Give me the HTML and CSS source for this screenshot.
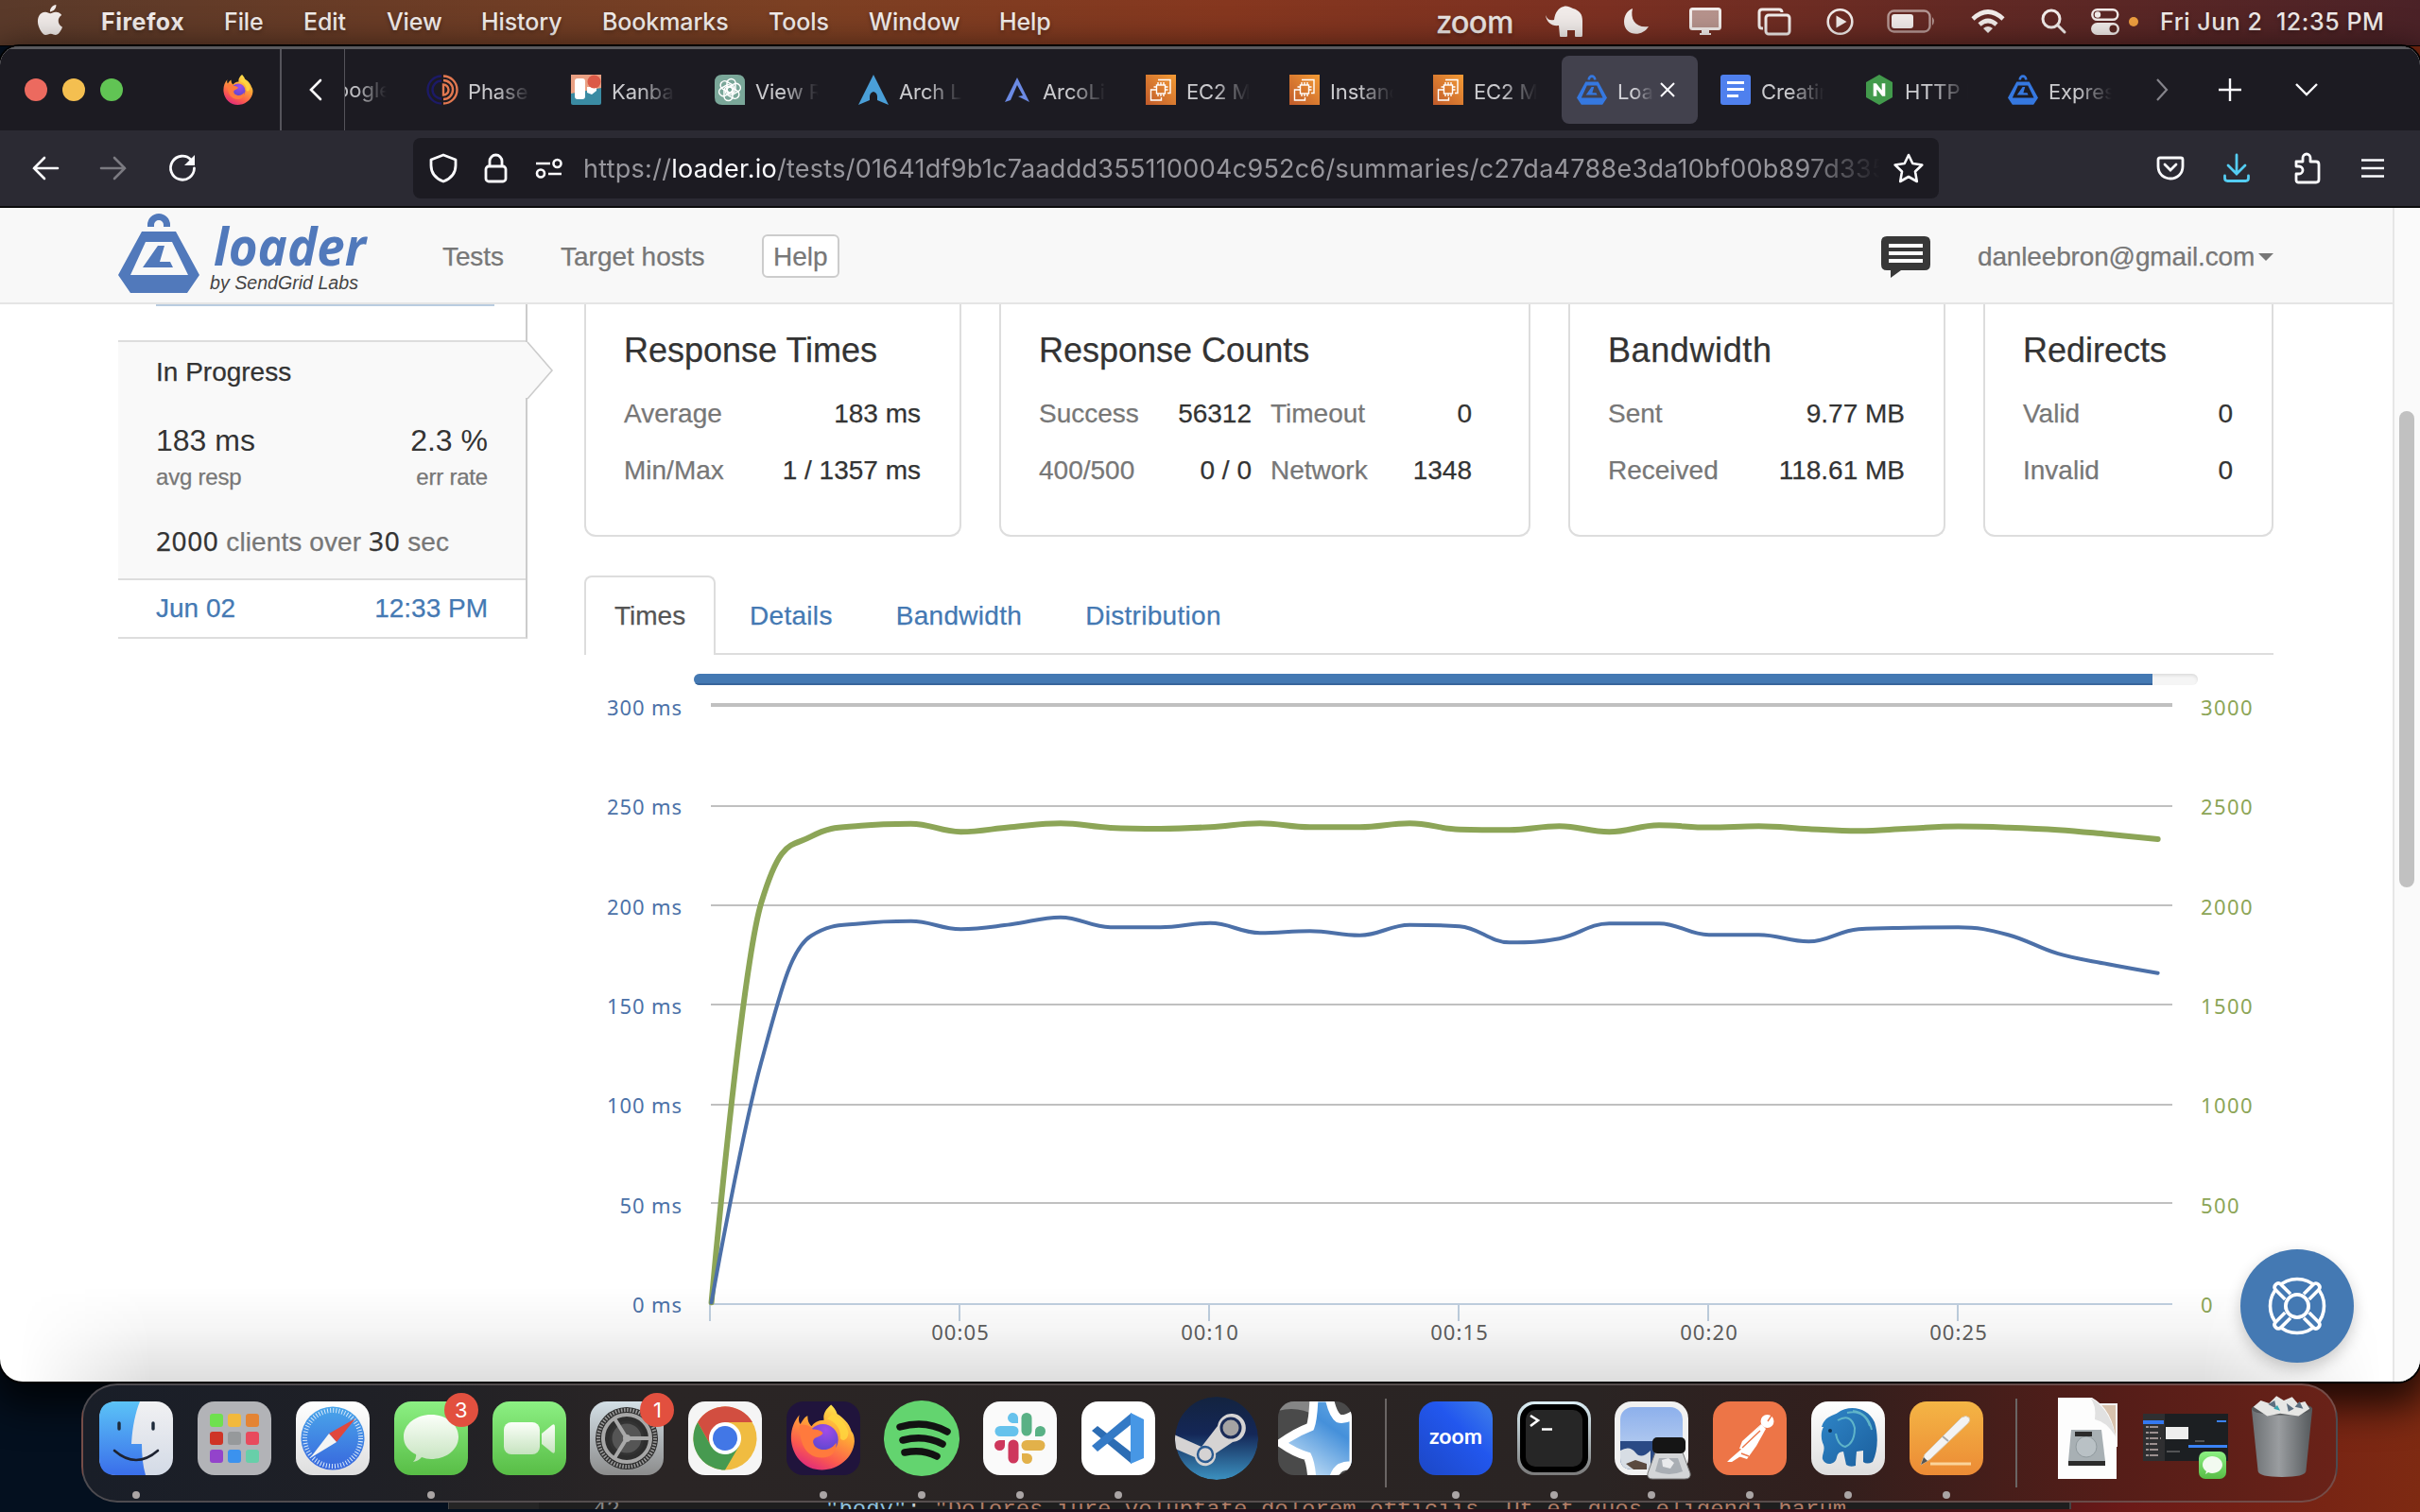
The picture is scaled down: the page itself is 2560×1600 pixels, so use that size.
FILE: index.html
```html
<!DOCTYPE html>
<html lang="en">
<head>
<meta charset="utf-8">
<title>loader.io</title>
<link rel="stylesheet" href="styles.css">
</head>
<body>
<svg width="0" height="0" class="defs">
  <defs>
    <linearGradient id="gFox" x1="0.8" y1="0" x2="0.3" y2="1"><stop offset="0" stop-color="#fff04f"/><stop offset=".4" stop-color="#ffa436"/><stop offset=".75" stop-color="#fb5a4e"/><stop offset="1" stop-color="#df2a7c"/></linearGradient>
    <radialGradient id="gGlobe" cx=".6" cy=".2" r=".9"><stop offset="0" stop-color="#a04ce8"/><stop offset="1" stop-color="#4a45c8"/></radialGradient>
    <linearGradient id="gGreen" x1="0" y1="0" x2="0" y2="1"><stop offset="0" stop-color="#8cf083"/><stop offset="1" stop-color="#58bd46"/></linearGradient>
    <linearGradient id="gBubble" x1="0" y1="0" x2="0" y2="1"><stop offset="0" stop-color="#fbfff9"/><stop offset="1" stop-color="#c6e3bf"/></linearGradient>
    <linearGradient id="gBlue" x1="0" y1="0" x2="0" y2="1"><stop offset="0" stop-color="#5bc3f7"/><stop offset="1" stop-color="#3a6eea"/></linearGradient>
    <linearGradient id="gFace" x1="0" y1="0" x2="0" y2="1"><stop offset="0" stop-color="#f1f1f3"/><stop offset="1" stop-color="#d3dae6"/></linearGradient>
    <linearGradient id="gWhite" x1="0" y1="0" x2="0" y2="1"><stop offset="0" stop-color="#ffffff"/><stop offset="1" stop-color="#dedede"/></linearGradient>
    <linearGradient id="gSafari" x1="0" y1="0" x2="0" y2="1"><stop offset="0" stop-color="#4aa6ea"/><stop offset="1" stop-color="#3867dd"/></linearGradient>
    <linearGradient id="gGear" x1="0" y1="0" x2="0" y2="1"><stop offset="0" stop-color="#d3dfe6"/><stop offset="1" stop-color="#8c8c8c"/></linearGradient>
    <linearGradient id="gSteam" x1="0" y1="0" x2="0" y2="1"><stop offset="0" stop-color="#13233f"/><stop offset=".45" stop-color="#142757"/><stop offset="1" stop-color="#3c91c0"/></linearGradient>
    <linearGradient id="gStar" x1="1" y1="0" x2=".4" y2="1"><stop offset="0" stop-color="#6aaee6"/><stop offset=".4" stop-color="#4590da"/><stop offset="1" stop-color="#c5e0f6"/></linearGradient>
    <linearGradient id="gZoom" x1="1" y1="0" x2="0" y2="1"><stop offset="0" stop-color="#3f80ea"/><stop offset=".4" stop-color="#2257ee"/><stop offset="1" stop-color="#1c47c5"/></linearGradient>
    <linearGradient id="gTerm" x1="0" y1="0" x2="0" y2="1"><stop offset="0" stop-color="#dbeef5"/><stop offset="1" stop-color="#7b7b7b"/></linearGradient>
    <linearGradient id="gSky" x1="0" y1="0" x2="0" y2="1"><stop offset="0" stop-color="#8db0ec"/><stop offset="1" stop-color="#c6d8f1"/></linearGradient>
    <linearGradient id="gPages" x1="0" y1="0" x2="0" y2="1"><stop offset="0" stop-color="#f4b545"/><stop offset="1" stop-color="#ec8b35"/></linearGradient>
    <linearGradient id="gTrash" x1="0" y1="0" x2="1" y2="0"><stop offset="0" stop-color="#6b6f72"/><stop offset=".45" stop-color="#9a9da0"/><stop offset="1" stop-color="#55595c"/></linearGradient>
    <linearGradient id="gEc2" x1="1" y1="0" x2="0" y2="1"><stop offset="0" stop-color="#f39b35"/><stop offset="1" stop-color="#c05b2b"/></linearGradient>
    <linearGradient id="gPg" x1="0" y1="0" x2="1" y2="1"><stop offset="0" stop-color="#2f86c8"/><stop offset="1" stop-color="#1b5f9d"/></linearGradient>
    <symbol id="fox" viewBox="0 0 64 64">
      <path d="M60 26C58 18 51 12 46 9 45 5 42 2 40 0c-6 5-8 10-7 15-6 0-10 3-12 6-3-2-4-6-4-10-3 1-5 5-7 8C8 17 8 13 9 10 3 17 0 26 1 36c2 16 14 28 30 28s31-12 32-28c0-4-1-8-3-10z" fill="url(#gFox)"/>
      <circle cx="32" cy="34" r="15" fill="url(#gGlobe)"/>
      <path d="M9 20c5-1 10 0 13 4 4 0 9 1 10 4-3 4-7 3-9 6s1 9 8 10c6 1 12-3 14-7 1 9-5 15-14 15C18 52 9 42 9 20z" fill="#ff7a3d"/>
      <path d="M36 14c9 3 14 10 13 19 3 4 8 1 8-6-2-8-8-14-16-18z" fill="#ffd83f" opacity=".8"/>
    </symbol>
    <symbol id="flask" viewBox="0 0 86 84">
      <path d="M31 14V12a12 12 0 0 1 24 0V14H48V12a5 5 0 0 0-10 0V14zM25 19H61L86 65 73 84H13L0 65zM29 30L13 65H74L57 30zM42 34H49L44 51H55L58 57H26z"/>
    </symbol>
    <symbol id="ec2" viewBox="0 0 32 32">
      <rect width="32" height="32" fill="url(#gEc2)"/>
      <g fill="none" stroke="#fff" stroke-width="1.4"><rect x="11.500" y="11" width="9" height="9"/><path d="M13 8v3m3-3v3m3-3v3M13 20v3m3-3v3m3-3v3M8.500 13h3m-3 3h3m9-3h3m-3 3h3M13 5.500h13v14h-3M10 16H5.500v11h11v-3"/></g>
    </symbol>
  </defs>
</svg>

<header class="menubar">
  <svg class="apple" viewBox="0 0 24 24" width="32" height="32" fill="#f2ecea"><path d="M12.152 6.896c-.948 0-2.415-1.078-3.960-1.040-2.040.027-3.910 1.183-4.961 3.014-2.117 3.675-.546 9.103 1.519 12.090 1.013 1.454 2.208 3.090 3.792 3.039 1.520-.065 2.090-.987 3.935-.987 1.831 0 2.350.987 3.960.948 1.637-.026 2.676-1.480 3.676-2.948 1.156-1.688 1.636-3.325 1.662-3.415-.039-.013-3.182-1.221-3.220-4.857-.026-3.040 2.480-4.494 2.597-4.559-1.429-2.090-3.623-2.324-4.390-2.376-2-.156-3.675 1.090-4.610 1.090zM15.530 3.830c.843-1.012 1.400-2.427 1.245-3.830-1.207.052-2.662.805-3.532 1.818-.780.896-1.454 2.338-1.273 3.714 1.338.104 2.715-.688 3.559-1.701"/></svg>
  <b>Firefox</b><span>File</span><span>Edit</span><span>View</span><span>History</span><span>Bookmarks</span><span>Tools</span><span>Window</span><span>Help</span>
  <svg width="82" height="40" viewBox="0 0 82 40"><text x="0" y="32" font-family="Lato" font-size="35" fill="#f2ecea" stroke="#f2ecea" stroke-width=".3" textLength="81" lengthAdjust="spacingAndGlyphs">zoom</text></svg>
  <svg width="42" height="36" viewBox="0 0 42 36" fill="#f2ecea"><path d="M1 11c2 5 5 6 9 5C11 8 15 3 20 2c3-1 6 0 10 2 7 2 10 6 10 13v15q0 2-1 2h-6q-1 0-1-1v-6h-8v6q0 1-1 1h-6q-1 0-1-1l-1-11C8 23 2 19 1 11z"/></svg>
  <svg width="28" height="30" viewBox="0 0 28 30" fill="#f2ecea"><path d="M10 1C7 13 14 22 27 20 20 32 1 30 1 15 1 9 4 3 10 1z"/></svg>
  <svg width="34" height="30" viewBox="0 0 34 30"><rect x="1.500" y="1.500" width="31" height="21" rx="2" fill="#f2ecea88" stroke="#f2ecea" stroke-width="3"/><path d="M13 23h8v4h2v2H11v-2h2z" fill="#f2ecea"/></svg>
  <svg width="36" height="30" viewBox="0 0 36 30" fill="none" stroke="#f2ecea" stroke-width="3"><path d="M6 22H5q-3 0-3-3V5q0-3 3-3h18q3 0 3 3"/><rect x="9" y="8" width="25" height="20" rx="3"/></svg>
  <svg width="30" height="30" viewBox="0 0 30 30" fill="#f2ecea"><circle cx="14.500" cy="15" r="12.800" fill="none" stroke="#f2ecea" stroke-width="2.600"/><path d="M10.500 8.500l11 6.500-11 6.500z"/></svg>
  <svg width="52" height="26" viewBox="0 0 52 26"><rect x="1.500" y="1.500" width="44" height="22" rx="6" fill="none" stroke="#f2ecea90" stroke-width="2.400"/><rect x="5" y="5" width="23" height="15" rx="3" fill="#f2ecea"/><path d="M48 8q4 4 0 9z" fill="#f2ecea90"/></svg>
  <svg width="36" height="26" viewBox="0 0 36 26"><g fill="none" stroke="#f2ecea" stroke-width="4.600"><path d="M2 10q16-15 32 0"/><path d="M9 16q9-8 18 0"/></g><path d="M18 25l-5-5q5-4 10 0z" fill="#f2ecea"/></svg>
  <svg width="28" height="28" viewBox="0 0 28 28" fill="none" stroke="#f2ecea" stroke-width="3" stroke-linecap="round"><circle cx="11" cy="11" r="9"/><path d="M18 18l7 7"/></svg>
  <svg width="30" height="28" viewBox="0 0 30 28"><rect x="1.300" y="1.300" width="27" height="10.500" rx="5.200" fill="none" stroke="#f2ecea" stroke-width="2.400"/><circle cx="7" cy="6.500" r="3.200" fill="#f2ecea"/><rect y="15" width="30" height="13" rx="6.500" fill="#f2ecea"/><circle cx="23.500" cy="21.500" r="4" fill="#5b2823"/></svg>
  <i class="mic"></i>
  <span class="clock">Fri Jun 2 &nbsp;12:35 PM</span>
</header>

<div class="editor"><span class="ln">42</span><span class="code"><b>"body"</b><u>: </u>"Dolores iure voluptate dolorem officiis. Ut et quos eligendi harum</span></div>

<section class="window">
  <div class="tabbar">
    <div class="lights"><i class="r"></i><i class="y"></i><i class="g"></i></div>
    <svg class="pinned" width="32" height="32"><use href="#fox"/></svg>
    <div class="scroll-left"><svg width="14" height="24" viewBox="0 0 14 24"><path d="M12 2L2 12l10 10" fill="none" stroke="#fbfbfe" stroke-width="2.600" stroke-linecap="round"/></svg></div>
    <div class="cut"><span>oogle</span></div>
    <div class="tab"><svg width="32" height="32" viewBox="0 0 32 32" fill="none" stroke-width="2.400"><path d="M15 1.500a14.500 14.500 0 0 0 0 29M15 6.500a9.500 9.500 0 0 0 0 19" stroke="#1c1a66"/><path d="M17 1.500a14.500 14.500 0 0 1 0 29M17 6a10 10 0 0 1 0 20M17 10.500a5.500 5.500 0 0 1 0 11z" stroke="#e27850"/></svg><span>Phase 4</span></div>
    <div class="tab"><svg width="32" height="32" viewBox="0 0 32 32"><rect width="32" height="32" rx="2" fill="#3a8ba3"/><path d="M0 0h32v14L0 20z" fill="#e9a083"/><rect x="4" y="4" width="11" height="22" rx="3" fill="#fff"/><path d="M17 13h10v4l-5 4-5-2z" fill="#fff"/><circle cx="24.500" cy="7.500" r="7" fill="#db5a48"/></svg><span>Kanban</span></div>
    <div class="tab"><svg width="32" height="32" viewBox="0 0 32 32"><path d="M8 0h16q8 0 8 8v24H8q-8 0-8-8V8q0-8 8-8z" fill="#7aa799"/><g fill="none" stroke="#fff" stroke-width="1.500"><rect x="13" y="4.500" width="9" height="15" rx="4.500"/><rect x="13" y="4.500" width="9" height="15" rx="4.500" transform="rotate(60 16 16)"/><rect x="13" y="4.500" width="9" height="15" rx="4.500" transform="rotate(120 16 16)"/><rect x="13" y="4.500" width="9" height="15" rx="4.500" transform="rotate(180 16 16)"/><rect x="13" y="4.500" width="9" height="15" rx="4.500" transform="rotate(240 16 16)"/><rect x="13" y="4.500" width="9" height="15" rx="4.500" transform="rotate(300 16 16)"/></g></svg><span>View Re</span></div>
    <div class="tab"><svg width="32" height="32" viewBox="0 0 32 32"><path d="M16 0l16 32-12-5q1-8-4-9-5 1-4 9L0 32z" fill="#4a9fd8"/></svg><span>Arch Li</span></div>
    <div class="tab"><svg width="32" height="32" viewBox="0 0 32 32"><path d="M16 3l13 26-12-6 5-1-6-11L9 27l-6 2z" fill="#6b8ae4"/></svg><span>ArcoLin</span></div>
    <div class="tab"><svg width="32" height="32"><use href="#ec2"/></svg><span>EC2 Ma</span></div>
    <div class="tab"><svg width="32" height="32"><use href="#ec2"/></svg><span>Instanc</span></div>
    <div class="tab"><svg width="32" height="32"><use href="#ec2"/></svg><span>EC2 Ma</span></div>
    <div class="tab active"><svg width="32" height="32" fill="#3578e0"><use href="#flask"/></svg><span>Load</span><svg class="close" width="18" height="18" viewBox="0 0 18 18"><path d="M2 2l14 14M16 2L2 16" stroke="#fbfbfe" stroke-width="2"/></svg></div>
    <div class="tab"><svg width="32" height="32" viewBox="0 0 32 32"><rect width="32" height="32" rx="3" fill="#4f80ee"/><path d="M7 7h18v3H7zM7 14h18v3H7zM7 21h12v3H7z" fill="#fff"/></svg><span>Creatin</span></div>
    <div class="tab"><svg width="32" height="32" viewBox="0 0 32 32"><path d="M16 0l14 8v16l-14 8-14-8V8z" fill="#429a4c"/><path d="M10.500 22V10h2l7 9v-9h2v12h-2l-7-9v9z" fill="#fff" stroke="#fff" stroke-width="1.600"/></svg><span>HTTP L</span></div>
    <div class="tab"><svg width="32" height="32" fill="#3578e0"><use href="#flask"/></svg><span>Expres</span></div>
    <div class="tabtools">
      <svg width="14" height="26" viewBox="0 0 14 26"><path d="M2 2l10 11L2 24" fill="none" stroke="#85848b" stroke-width="2.200"/></svg>
      <svg width="24" height="24" viewBox="0 0 24 24"><path d="M12 0v24M0 12h24" stroke="#fbfbfe" stroke-width="2.400"/></svg>
      <svg width="26" height="16" viewBox="0 0 26 16"><path d="M2 2l11 11L24 2" fill="none" stroke="#fbfbfe" stroke-width="2.400"/></svg>
    </div>
  </div>

  <div class="toolbar">
    <svg width="28" height="26" viewBox="0 0 28 26" fill="none" stroke="#fbfbfe" stroke-width="2.600" stroke-linecap="round"><path d="M13 2L2 13l11 11M2 13h25"/></svg>
    <svg width="28" height="26" viewBox="0 0 28 26" fill="none" stroke="#7b7a81" stroke-width="2.600" stroke-linecap="round"><path d="M15 2l11 11-11 11M26 13H1"/></svg>
    <svg width="30" height="30" viewBox="0 0 30 30"><path d="M24 6A12.500 12.500 0 1 0 27.500 15" fill="none" stroke="#fbfbfe" stroke-width="2.800" stroke-linecap="round"/><path d="M28 1v11H17z" fill="#fbfbfe"/></svg>
    <div class="urlbar">
      <svg width="30" height="32" viewBox="0 0 30 32"><path d="M15 2l13 5v6c0 8-5 14-13 17C7 27 2 21 2 13V7z" fill="none" stroke="#fbfbfe" stroke-width="2.800" stroke-linejoin="round"/></svg>
      <svg width="26" height="32" viewBox="0 0 26 32" fill="none" stroke="#fbfbfe" stroke-width="2.800"><rect x="2" y="14" width="21" height="16" rx="3"/><path d="M6 14V8.500a6.500 6.500 0 0 1 13 0V14"/></svg>
      <svg width="30" height="22" viewBox="0 0 30 22" fill="none" stroke="#fbfbfe" stroke-width="2.600"><path d="M1 6h15M14 17h14"/><circle cx="23.500" cy="6" r="4"/><circle cx="6" cy="16.500" r="4"/></svg>
      <span class="url">https://<b>loader.io</b>/tests/01641df9b1c7aaddd355110004c952c6/summaries/c27da4788e3da10bf00b897d335</span>
      <svg width="34" height="32" viewBox="0 0 34 32"><path d="M17 2l4.300 9 10 1.500-7.300 7 1.800 10.500-8.800-5-8.800 5L10 19.500l-7.300-7 10-1.500z" fill="none" stroke="#fbfbfe" stroke-width="2.600" stroke-linejoin="round"/></svg>
    </div>
    <svg width="30" height="26" viewBox="0 0 30 26" fill="none" stroke="#fbfbfe" stroke-width="2.800" stroke-linecap="round"><path d="M4 2h22q2 0 2 2v7c0 8-6 13-13 13S2 19 2 11V4q0-2 2-2z"/><path d="M9 9l6 6 6-6"/></svg>
    <svg width="28" height="30" viewBox="0 0 28 30" fill="none" stroke="#54cdf2" stroke-width="2.800" stroke-linecap="round"><path d="M14 1v19M5 12l9 9 9-9M1.500 23v2.500q0 3 3 3h19q3 0 3-3V23"/></svg>
    <svg width="30" height="34" viewBox="0 0 30 34" fill="none" stroke="#fbfbfe" stroke-width="2.800" stroke-linejoin="round"><path d="M3 10h7V6a4 4 0 0 1 8 0v4h6q3 0 3 3v16q0 3-3 3H5q-2 0-2-3v-6h3a4 4 0 0 0 0-8H3z"/></svg>
    <svg width="26" height="20" viewBox="0 0 26 20"><path d="M1 1.500h24M1 10h24M1 18.500h24" stroke="#fbfbfe" stroke-width="2.600"/></svg>
  </div>

  <div class="viewport">
    <div class="page">
      <nav class="nav">
        <svg class="logo" width="86" height="84" fill="#5179bb"><use href="#flask"/></svg>
        <svg class="wordmark" width="170" height="84" viewBox="0 0 170 84"><text x="6" y="54" font-family="Open Sans" font-weight="700" font-style="italic" font-size="56" fill="#5179bb" textLength="161" lengthAdjust="spacingAndGlyphs">loader</text><text x="2" y="79" font-family="Liberation Sans" font-style="italic" font-size="20" fill="#444" textLength="157" lengthAdjust="spacingAndGlyphs">by SendGrid Labs</text></svg>
        <a class="tests">Tests</a><a class="hosts">Target hosts</a><a class="help">Help</a>
        <svg class="chat" width="52" height="44" viewBox="0 0 52 44"><path d="M6 0h40q6 0 6 6v24q0 6-6 6H21l-11 8v-8H6q-6 0-6-6V6q0-6 6-6z" fill="#383838"/><path d="M8 10h36M8 18h36M8 26h36" stroke="#fff" stroke-width="4"/></svg>
        <span class="user">danleebron@gmail.com</span><i class="caret"></i>
      </nav>
      <div class="content">
        <aside class="side">
          <div class="prev"></div>
          <div class="run">
            <svg class="notch" width="30" height="60" viewBox="0 0 30 60"><path d="M0 0h2l26 30L2 59H0z" fill="#f9f9f9"/><path d="M2 0l26 30L2 60" fill="none" stroke="#ccc" stroke-width="1.600"/></svg>
            <div class="status">In Progress</div>
            <div class="pair big"><span>183 ms</span><span>2.3 %</span></div>
            <div class="pair small"><span>avg resp</span><span>err rate</span></div>
            <div class="load"><b>2000</b> clients over <b>30</b> sec</div>
          </div>
          <div class="pair date"><span>Jun 02</span><span>12:33 PM</span></div>
        </aside>
        <main class="main">
          <div class="cards">
            <section class="card"><h3>Response Times</h3><dl><dt>Average</dt><dd>183 ms</dd><dt>Min/Max</dt><dd>1 / 1357 ms</dd></dl></section>
            <section class="card counts"><h3>Response Counts</h3><dl><dt>Success</dt><dd>56312</dd><dt>Timeout</dt><dd>0</dd><dt>400/500</dt><dd>0 / 0</dd><dt>Network</dt><dd>1348</dd></dl></section>
            <section class="card traffic"><h3>Bandwidth</h3><dl><dt>Sent</dt><dd>9.77 MB</dd><dt>Received</dt><dd>118.61 MB</dd></dl></section>
            <section class="card"><h3>Redirects</h3><dl><dt>Valid</dt><dd>0</dd><dt>Invalid</dt><dd>0</dd></dl></section>
          </div>
          <div class="tabs"><a class="on">Times</a><a>Details</a><a>Bandwidth</a><a>Distribution</a></div>
          <div class="progress"><i></i></div>
          <svg id="chart" width="1800" height="737" viewBox="618 725 1800 737"></svg>
        </main>
      </div>
    </div>
    <div class="scrollbar"><i></i></div>
    <div class="shade"></div>
    <div class="helpbtn"><svg width="64" height="64" viewBox="0 0 64 64" fill="none" stroke="#fff" stroke-width="3.600"><circle cx="32" cy="32" r="28.500"/><circle cx="32" cy="32" r="12"/><g fill="#4479b3"><path d="M28 20V6q0-4 4-4t4 4v14" transform="rotate(45 32 32) translate(0 -2)"/><path d="M28 20V6q0-4 4-4t4 4v14" transform="rotate(135 32 32) translate(0 -2)"/><path d="M28 20V6q0-4 4-4t4 4v14" transform="rotate(225 32 32) translate(0 -2)"/><path d="M28 20V6q0-4 4-4t4 4v14" transform="rotate(315 32 32) translate(0 -2)"/></g><circle cx="32" cy="32" r="12" fill="#4479b3"/></svg></div>
  </div>
</section>

<footer class="dock">
  <div class="app run-dot"><svg viewBox="0 0 78 78"><rect width="78" height="78" rx="18" fill="url(#gFace)"/><path d="M18 0h25c-5 12-8 28-9 45h11c0 12 1 23 4 33H18Q0 78 0 60V18Q0 0 18 0z" fill="url(#gBlue)"/><path d="M21 23v6M57 23v6" stroke="#1d2a3a" stroke-width="3.400" stroke-linecap="round"/><path d="M16 52q23 20 46 0" fill="none" stroke="#1d2230" stroke-width="2.600" stroke-linecap="round"/></svg></div>
  <div class="app"><svg viewBox="0 0 78 78"><rect width="78" height="78" rx="18" fill="#b2b3b7"/><g><rect x="13" y="13" width="14" height="14" rx="3" fill="#6fe04f"/><rect x="32" y="13" width="14" height="14" rx="3" fill="#f2b93c"/><rect x="51" y="13" width="14" height="14" rx="3" fill="#e48434"/><rect x="13" y="32" width="14" height="14" rx="3" fill="#cf3426"/><rect x="32" y="32" width="14" height="14" rx="3" fill="#96999b"/><rect x="51" y="32" width="14" height="14" rx="3" fill="#e84a5d"/><rect x="13" y="51" width="14" height="14" rx="3" fill="#9343cb"/><rect x="32" y="51" width="14" height="14" rx="3" fill="#3b92ee"/><rect x="51" y="51" width="14" height="14" rx="3" fill="#67cfa9"/></g></svg></div>
  <div class="app"><svg viewBox="0 0 78 78"><rect width="78" height="78" rx="18" fill="url(#gWhite)"/><circle cx="39" cy="39" r="33.500" fill="url(#gSafari)"/><circle cx="39" cy="39" r="29.500" fill="none" stroke="#dcebfa" stroke-width="5" stroke-dasharray="1 2.090"/><path d="M63 18L35 34l8 9z" fill="#e0483d"/><path d="M15 60l20-26 8 9z" fill="#f4f4f4"/></svg></div>
  <div class="app run-dot"><svg viewBox="0 0 78 78"><rect width="78" height="78" rx="18" fill="url(#gGreen)"/><path d="M39 14c16 0 29 10 29 23.500S55 61 39 61q-5 0-10-2-3 4-9 5 4-4 3-8C15 52 10 46 10 37.500 10 24 23 14 39 14z" fill="url(#gBubble)"/></svg><em>3</em></div>
  <div class="app"><svg viewBox="0 0 78 78"><rect width="78" height="78" rx="18" fill="url(#gGreen)"/><rect x="12" y="22" width="38" height="34" rx="8" fill="url(#gBubble)"/><path d="M52 34l11-9q3-2 3 2v25q0 4-3 2l-11-9z" fill="url(#gBubble)"/></svg></div>
  <div class="app"><svg viewBox="0 0 78 78"><rect width="78" height="78" rx="18" fill="url(#gGear)"/><circle cx="39" cy="39" r="33" fill="#2e2e2e"/><circle cx="39" cy="39" r="30" fill="none" stroke="#9a9a9a" stroke-width="4" stroke-dasharray="1.600 1.540"/><circle cx="39" cy="39" r="25" fill="none" stroke="#a7a7a7" stroke-width="4"/><circle cx="39" cy="39" r="17" fill="#555" stroke="#333" stroke-width="3"/><path d="M39 39h25M39 39L26 18M39 39L26 60" stroke="#a9a9a9" stroke-width="4"/><circle cx="39" cy="39" r="4" fill="#aaa"/></svg><em>1</em></div>
  <div class="app"><svg viewBox="0 0 78 78"><rect width="78" height="78" rx="18" fill="#f5f5f5"/><circle cx="39" cy="39" r="33.500" fill="#f0bc41"/><path d="M39 22H68A33.500 33.500 0 0 0 10 22L24 47z" fill="#d24e40"/><path d="M10 22A33.500 33.500 0 0 0 39 72.500L54 47 39 55 24 47z" fill="#479a50"/><circle cx="39" cy="39" r="17" fill="#fff"/><circle cx="39" cy="39" r="13" fill="#4277e6"/></svg></div>
  <div class="app run-dot"><svg viewBox="0 0 78 78"><rect width="78" height="78" rx="18" fill="#20143c"/><svg x="4" y="3" width="69" height="70"><use href="#fox"/></svg></svg></div>
  <div class="app run-dot"><svg viewBox="0 0 78 78"><circle cx="39" cy="39" r="40" fill="#63d46f"/><path d="M16 27q27-8 50 5M19 41q23-6 42 4M21 54q19-4 34 4" fill="none" stroke="#121212" stroke-width="7.500" stroke-linecap="round"/></svg></div>
  <div class="app run-dot"><svg viewBox="0 0 78 78"><rect width="78" height="78" rx="18" fill="#fafafa"/><g stroke-width="11" stroke-linecap="round"><path d="M46 17.500V31" stroke="#59b185"/><path d="M18 31.500H32" stroke="#66c2ec"/><path d="M32 46V60" stroke="#ce375c"/><path d="M46 46.500H60" stroke="#e2b14a"/></g><path d="M37 23H31a5.500 5.500 0 1 1 6-5.500z" fill="#66c2ec"/><path d="M55 37V31.500a5.500 5.500 0 1 1 5.500 5.500z" fill="#59b185"/><path d="M23 41V46.500a5.500 5.500 0 1 1-5.500-5.500z" fill="#ce375c"/><path d="M41 55h5.500a5.500 5.500 0 1 1-5.500 5.500z" fill="#e2b14a"/></svg></div>
  <div class="app run-dot"><svg viewBox="0 0 78 78"><rect width="78" height="78" rx="18" fill="#fff"/><path d="M11 31l6-5 36 28v12z" fill="#2c6db4"/><path d="M11 47l6 6 36-29V12z" fill="#347ac6"/><path d="M52 12l14 7v41l-14 6z" fill="#4797e5"/></svg></div>
  <div class="app"><svg viewBox="-5 -5 88 88" class="full"><clipPath id="rd"><circle cx="39" cy="39" r="44"/></clipPath><g clip-path="url(#rd)"><circle cx="39" cy="39" r="44" fill="url(#gSteam)"/><path d="M-6 35l29 13L40 26a15 15 0 1 1 16 17L38 55a11 11 0 0 1-22 4L-5 50z" fill="#d5d3d3"/><circle cx="54" cy="28" r="10" fill="#a5a3a3" stroke="#1b2c58" stroke-width="3"/><circle cx="27" cy="56" r="8" fill="none" stroke="#2a5a90" stroke-width="2.400"/></g></svg></div>
  <div class="app"><svg viewBox="0 0 78 78"><clipPath id="sq"><rect width="78" height="78" rx="17"/></clipPath><g clip-path="url(#sq)"><rect width="78" height="78" fill="#4a4a4a"/><path d="M0 0h40v15Q20 4 0 10z" fill="#858585"/><path d="M38-4Q37 20 34 27 18 33 3 44q14 10 28 14 4 8 5 26h22q2-10 8-14 6-3 14-2V14q-10 6-16 4-6-4-10-22z" fill="url(#gStar)" stroke="#fff" stroke-width="9"/></g></svg></div>
  <hr>
  <div class="app b run-dot"><svg viewBox="0 0 78 78"><rect width="78" height="78" rx="18" fill="url(#gZoom)"/><text x="11" y="45" font-family="Lato" font-weight="700" font-size="23" fill="#fff" textLength="56" lengthAdjust="spacingAndGlyphs">zoom</text></svg></div>
  <div class="app b run-dot"><svg viewBox="0 0 78 78"><rect width="78" height="78" rx="18" fill="url(#gTerm)"/><rect x="3" y="3" width="72" height="72" rx="16" fill="#000"/><rect x="9" y="9" width="60" height="60" rx="10" fill="#262626"/><path d="M14 15l8 5-8 6M26 29.500h11" fill="none" stroke="#fff" stroke-width="2.600"/></svg></div>
  <div class="app b run-dot"><svg viewBox="0 0 78 82" class="tall"><rect width="78" height="78" rx="18" fill="#f1f1f1"/><rect x="6" y="6" width="66" height="66" rx="13" fill="url(#gSky)"/><path d="M6 42h66v18q0 12-13 12H19Q6 72 6 60z" fill="#2a4a85"/><path d="M6 52q10-6 16 2t16-2v20H19Q6 72 6 60z" fill="#d7dde4"/><path d="M12 66l10-4 12 4v6H20z" fill="#5a4a3f"/><path d="M43 54h29l8 22q1 6-6 6H40q-6 0-5-6z" fill="#d3d5d7" stroke="#777"/><path d="M47 60h20l5 14q-14 6-29 0z" fill="#a9aeb4"/><path d="M50 62l7-2 6 5-4 6-8-2z" fill="#e9eaec"/><rect x="40" y="38" width="35" height="17" rx="5" fill="#151515"/></svg></div>
  <div class="app b run-dot"><svg viewBox="0 0 78 78"><rect width="78" height="78" rx="18" fill="#ed7547"/><path d="M51 24l5 5-10 18-10 14-9-3z" fill="#fff"/><path d="M51 24L31 42l-3 8 5 1zM33 48l-15 13-3 3 5 0 14-9z" fill="#fff"/><circle cx="57.500" cy="21" r="7" fill="#fff"/><path d="M31 49l19-18M58 21l4-6M30 55l8 3" stroke="#ed7547" stroke-width="1.400"/></svg></div>
  <div class="app b run-dot"><svg viewBox="0 0 78 78"><rect width="78" height="78" rx="18" fill="url(#gWhite)"/><path d="M11 27C15 15 22 16 28 12 40 3 60 6 67 22c4 12 4 30-2 42q-6 3-10 0V52l-7 1q-1 10-1 15-6 2-10-1l-3-14q-6 0-7 6c-1 8-12 10-15 2-1-4 3-9 1-15-3-6-3-14 0-19z" fill="url(#gPg)"/><path d="M28 20q14-8 18 8 0 16-10 20-8-2-10-14M38 12q18-4 24 14M44 10q16 2 20 20" fill="none" stroke="#5fb4c9" stroke-width="2"/><circle cx="20" cy="31" r="2" fill="#0c3355"/></svg></div>
  <div class="app b run-dot"><svg viewBox="0 0 78 78"><rect width="78" height="78" rx="18" fill="url(#gPages)"/><path d="M22 66h43" stroke="#fbd49b" stroke-width="3"/><path d="M12 67l4-11 39-39q5-3 8 0 2 3-1 6L22 61z" fill="#f3f3f3" stroke="#d8c6a8"/><path d="M35 37l6 5" stroke="#aaa" stroke-width="2"/><path d="M12 67l3-8 4 4z" fill="#555"/></svg></div>
  <hr>
  <div class="app"><svg viewBox="0 0 78 86" class="doc"><path d="M50 7h20v44H50z" fill="#d9c3ae" stroke="#f3f3f3" stroke-width="2"/><path d="M8 0h36q22 12 26 48v38H8z" fill="#fdfdfd"/><path d="M42 0q7 8 5 23 12 2 22 18Q62 10 42 0z" fill="#e1e1e1"/><path d="M22 34h32l4 33v5H19v-5z" fill="#a8b0b4"/><circle cx="38" cy="52" r="11" fill="#b9c1c5" stroke="#909a9e"/><path d="M26 36h18v5H26zM19 67h39v5H19z" fill="#2b2b2b"/></svg></div>
  <div class="app"><svg viewBox="0 0 90 86" class="thumb"><rect y="15" width="90" height="50" fill="#1c1f22"/><rect y="15" width="23" height="50" fill="#2f2f31"/><rect y="22" width="22" height="4" fill="#3478f0"/><path d="M3 29h15M3 35h14M3 41h16M3 47h12M3 53h15M3 59h14" stroke="#9b8f8f" stroke-width="2" stroke-dasharray="3 1 9 2"/><rect x="24" y="29" width="24" height="13" fill="#eee"/><rect x="48" y="48" width="41" height="3" fill="#3a82f5"/><rect x="78" y="22" width="10" height="2" fill="#3a82f5"/><path d="M25 55h14M55 44h10" stroke="#888"/><rect x="59" y="55" width="29" height="29" rx="7" fill="url(#gGreen)"/><path d="M73 60c6 0 11 4 11 9s-5 9-11 9q-2 0-4-1l-3 2 1-3q-4-3-4-7c0-5 5-9 10-9z" fill="#f2faf0"/></svg></div>
  <div class="app"><svg viewBox="0 0 78 90" class="trash"><path d="M6 14h66l-7 68q-1 6-26 6t-26-6z" fill="url(#gTrash)"/><ellipse cx="39" cy="14" rx="33" ry="7" fill="#55585a"/><path d="M8 12l8-7 9 3 8-8 8 5 9-4 6 7 8-2 5 8-12 8-20-3-14 3z" fill="#e6e6e4"/><path d="M24 9l7-4 2 9zM44 8l8 6-6 3zM58 6l4 8-9-2z" fill="#5c6f80"/><path d="M30 14l4-4 3 6z" fill="#38a6b0"/></svg></div>
</footer>
<script src="chart.js"></script>
</body>
</html>
```
FILE: styles.css
```css
* { box-sizing: border-box; }
body {
  margin: 0; width: 2560px; height: 1600px; overflow: hidden; position: relative;
  font-family: "Liberation Sans", Arial, sans-serif;
  background:
    linear-gradient(90deg, #04101f 0, #04101f 480px, #3a1018 2000px, #6b1a18 2250px, #7e2a12 2560px);
}
svg { display: block; flex: none; overflow: visible; }
.defs { position: absolute; }

/* menu bar */
.menubar {
  height: 49px; display: grid; align-items: center; padding: 0 0 2px 37px;
  grid-template-columns: 70px 130px 84px 88px 100px 128px 176px 106px 138px 463px 114px 83px 70px 72px 73px 64px 89px 74px 53px 40px 33px 1fr;
  font: 500 25px Inter, sans-serif; color: #f2ecea; white-space: nowrap; letter-spacing: -.1px;
  background: linear-gradient(90deg, #5a3a2a 0, #6a3c26 400px, #7c4023 850px, #86371f 1300px, #7b3022 1700px, #622924 2080px, #4b2227 2560px);
  border-bottom: 1px solid #000;
  text-shadow: 0 2px 4px rgba(0,0,0,.3);
}
.menubar b { font-weight: 700; letter-spacing: .5px; }
.menubar .clock { letter-spacing: .55px; }
.menubar .apple { margin-top: -5px; }
.mic { width: 10px; height: 10px; border-radius: 50%; background: #f0a040; }

/* editor window sliver under the dock */
.editor {
  position: absolute; left: 474px; top: 1440px; width: 1717px; height: 160px; padding-top: 144px;
  background: linear-gradient(90deg, #252525 95px, #1e1e1e 95px);
  border-right: 2px solid #444; border-left: 1px solid #444;
  font: 24px/28px "Liberation Mono", monospace; color: #b07c66; display: grid; grid-template-columns: 181px 1fr;
  clip-path: inset(0 0 3px 0); white-space: pre;
}
.editor .ln { text-align: right; color: #858585; }
.editor .code { padding-left: 217px; }
.editor b { font-weight: 400; color: #8fc0dc; }
.editor u { text-decoration: none; color: #ccc; }

/* browser window */
.window {
  position: absolute; left: 0; top: 49px; width: 2560px; height: 1413px; border-radius: 20px 20px 24px 24px; overflow: hidden;
  display: flex; flex-direction: column; background: #fff; box-shadow: 0 0 0 2px #000, 0 16px 40px 10px rgba(0,0,0,.75);
}
.tabbar { height: 89px; border-top: 3px solid #5a5a5e; background: #1c1b22; display: flex; align-items: center; font: 22px Inter, sans-serif; color: #fbfbfe; flex: none; }
.lights { display: flex; gap: 16px; padding-left: 26px; width: 236px; }
.lights i { width: 24px; height: 24px; border-radius: 50%; }
.r { background: #ec6a5f; } .y { background: #f4bf50; } .g { background: #61c454; }
.scroll-left { width: 69px; height: 86px; margin-left: 28px; border: solid #55545b; border-width: 0 1px 0 2px; display: flex; align-items: center; justify-content: center; padding-left: 6px; }
.cut { width: 71px; overflow: hidden; height: 28px; }
.cut span { display: block; width: 44px; padding-top: 1px; text-indent: -9px; overflow: hidden; -webkit-mask: linear-gradient(90deg, #000 30%, transparent); mask: linear-gradient(90deg, #000 30%, transparent); opacity: .72; }
.tab { width: 152px; height: 72px; display: flex; align-items: center; gap: 11px; padding-left: 16px; border-radius: 8px; }
.tab span { width: 67px; overflow: hidden; white-space: nowrap; line-height: 30px; padding-top: 3px; opacity: .78; letter-spacing: -.1px; -webkit-mask: linear-gradient(90deg, #000 45%, transparent); mask: linear-gradient(90deg, #000 45%, transparent); }
.tab.active { width: 144px; margin-right: 8px; background: #42414d; }
.tab.active span { width: 38px; }
.tab .close { margin-left: -5px; }
.tabtools { display: grid; grid-template-columns: 67px 80px 26px; align-items: center; padding-left: 20px; }

.toolbar { height: 82px; flex: none; background: #2b2a33; border-bottom: 2px solid #0c0c0d; display: grid; align-items: center; padding-left: 34px;
  grid-template-columns: 72px 72px 259px 1614px 71px 74px 71px 1fr; }
.urlbar { height: 64px; background: #1c1b22; border-radius: 8px; display: grid; align-items: center; padding-left: 17px; grid-template-columns: 58px 54px 51px 1385px 34px; }
.toolbar > svg:nth-of-type(n+4) { margin-left: 230px; }
.url { font: 27px/40px Inter, sans-serif; padding-top: 2px; color: #97969c; white-space: nowrap; overflow: hidden; width: 1372px; letter-spacing: .27px; -webkit-mask: linear-gradient(90deg, #000 94%, transparent); mask: linear-gradient(90deg, #000 94%, transparent); }
.url b { font-weight: 400; color: #fbfbfe; }

/* page */
.viewport { flex: 1; position: relative; display: grid; grid-template-columns: 2531px 29px; }
.page { overflow: hidden; height: 1242px; -webkit-text-stroke: .25px; }
.nav { height: 102px; background: #f8f8f8; border-bottom: 2px solid #e5e5e5; display: flex; padding-left: 125px; font-size: 28px; line-height: 32px; color: #777; align-items: flex-start; white-space: nowrap; }
.nav .logo { margin-top: 6px; }
.wordmark { margin: 7px 0 0 9px; -webkit-text-stroke: 0; }
.tests { margin: 36px 0 0 78px; width: 125px; letter-spacing: -.1px; }
.hosts { margin-top: 36px; width: 213px; }
.help { margin-top: 28px; border: 2px solid #ccc; border-radius: 6px; background: #fff; height: 46px; width: 82px; padding: 6px 0 0 10px; }
.chat { margin: 30px 0 0 1102px; }
.user { margin: 36px 0 0 50px; width: 297px; letter-spacing: -.15px; }
.caret { margin-top: 48px; border: 8px solid transparent; border-top-color: #777; border-bottom: 0; }
.content { display: grid; grid-template-columns: 433px 1800px; column-gap: 60px; padding-left: 125px; align-items: start; }
.side { border-right: 2px solid #ccc; height: 354px; font-size: 28px; line-height: 32px; color: #333; border-bottom: 2px solid #ddd; }
.prev { height: 38px; width: 358px; margin-left: 40px; border-top: 2px solid #b9cce0; }
.run { position: relative; height: 254px; background: #f9f9f9; border: solid #ddd; border-width: 2px 0; padding: 16px 40px 0; }
.notch { position: absolute; left: 431px; top: 0; }
.pair { display: flex; justify-content: space-between; }
.big { font-size: 32px; line-height: 36px; margin-top: 38px; -webkit-text-stroke: 0; }
.small { font-size: 24px; line-height: 28px; color: #777; margin-top: 7px; letter-spacing: -.2px; }
.load { margin-top: 38px; color: #777; letter-spacing: .1px; }
.load b { font: 28px/30px "Noto Sans", sans-serif; color: #333; letter-spacing: .6px; }
.date { padding: 14px 40px 0; color: #4479b3; }
.cards { display: grid; width: 1787px; height: 246px; grid-template-columns: 399px 562px 399px 307px; column-gap: 40px; }
.card { border: 2px solid #ddd; border-top: 0; border-radius: 0 0 12px 12px; padding: 29px 41px 0 40px; color: #333; }
.card h3 { margin: 0 0 17px; font-size: 36px; line-height: 40px; font-weight: 400; white-space: nowrap; }
.traffic h3 { letter-spacing: .6px; }
.card dl { margin: 0; display: grid; grid-template-columns: auto auto; font-size: 28px; line-height: 60px; white-space: nowrap; }
.card dt { color: #777; } .card dd { margin: 0; text-align: right; }
.counts dl { grid-template-columns: 119px 106px 115px 118px; }
.counts dt:nth-of-type(even) { padding-left: 20px; }
.tabs { margin-top: 41px; width: 1787px; height: 84px; border-bottom: 2px solid #ddd; display: flex; font-size: 28px; line-height: 32px; color: #4479b3; gap: 67px; }
.tabs a { padding-top: 27px; letter-spacing: .3px; }
.tabs .on { width: 139px; margin-right: -31px; height: 84px; border: 2px solid #ddd; border-bottom: 0; border-radius: 8px 8px 0 0; background: #fff; color: #555; padding: 25px 0 0 30px; letter-spacing: 0; }
.progress { margin: 20px 0 0 116px; width: 1591px; height: 12px; border-radius: 6px; overflow: hidden; background: #f5f5f5; box-shadow: inset 0 2px 3px #ddd; }
.progress i { display: block; width: 1543px; height: 12px; background: #4479b3; border-bottom: 2px solid #38659b; }
.scrollbar { background: #fafafa; border-left: 2px solid #e6e6e6; padding: 215px 0 0 5px; }
.scrollbar i { display: block; width: 16px; height: 504px; border-radius: 8px; background: #c1c1c1; }
.shade { position: absolute; left: 0; right: 0; bottom: 0; height: 100px; background: linear-gradient(180deg, rgba(0,0,0,0), rgba(0,0,0,.04) 45%, rgba(0,0,0,.13)); -webkit-mask: linear-gradient(90deg, transparent 20px, #000 160px, #000 2330px, transparent 2520px); mask: linear-gradient(90deg, transparent 20px, #000 160px, #000 2330px, transparent 2520px); }
.helpbtn { position: absolute; left: 2370px; top: 1102px; width: 120px; height: 120px; border-radius: 50%; background: #4479b3; display: grid; place-items: center; box-shadow: 0 6px 16px rgba(0,0,0,.2); }

/* chart */
.grid { stroke: #c0c0c0; stroke-width: 2; }
.axis { stroke: #c0d0e0; stroke-width: 2; }
.lab { font: 22px "Noto Sans", sans-serif; letter-spacing: .9px; }
.lab.ms { fill: #4c72a8; text-anchor: end; } .lab.n { fill: #8ca557; letter-spacing: 1.4px; } .lab.t { fill: #606060; text-anchor: middle; letter-spacing: 1.1px; }
.line { fill: none; stroke-linecap: round; stroke-linejoin: round; }

/* dock */
.dock { position: absolute; left: 86px; top: 1464px; width: 2387px; height: 126px; border-radius: 38px; border: 2px solid rgba(130,120,120,.5); display: flex; padding: 17px 0 0 17px;
  background: linear-gradient(90deg, #191e28 0, #1f2026 300px, #2a2525 600px, #2a2423 1600px, #321f1d 1850px, #551d18 2150px, #6a2218 2387px); }
.app { width: 78px; height: 100px; margin-right: 25.900px; position: relative; flex: none; }
.app.b { margin-right: 25.700px; }
.app svg { width: 78px; height: 78px; }
.app svg svg { width: 69px; height: 70px; }
.run-dot::after { content: ""; position: absolute; left: 35px; top: 95px; width: 8px; height: 8px; border-radius: 50%; background: #aaa5a5; }
.app em { position: absolute; left: 53px; top: -9px; width: 36px; height: 36px; border-radius: 50%; background: #e2503f; color: #fff; font: 22px/36px Inter, sans-serif; text-align: center; }
.dock hr { width: 2px; height: 94px; margin: -3px 34.500px 0 9px; border: 0; background: #6a6564; flex: none; }
.app .full { width: 88px; height: 88px; margin: -5px; }
.app .tall { height: 82px; }
.app .doc { height: 86px; margin-top: -4px; }
.app .thumb { width: 90px; height: 86px; margin: -2px 0 0 -6px; }
.app .trash { width: 76px; height: 90px; margin-top: -7px; }
```
FILE: chart.js
```js
const svg = document.getElementById('chart');
const X = i => 752.6 + 52.76 * i;
const rows = [746, 853, 958, 1063, 1169, 1273, 1380];
const users = [1379, 956, 886, 874.6, 872.5, 881, 876, 872, 876.7, 877.7, 876, 872, 876, 876, 872, 878.5, 879, 875, 881, 874, 876.4, 875, 878, 880, 877.5, 875.4, 876.5, 879, 883.6, 888.7];
const times = [1379, 1124.6, 991, 978, 975.5, 984, 979, 971.5, 982, 982, 977.6, 988, 986, 990.5, 979.6, 981, 998, 994, 978, 978, 990, 990, 997, 984, 982.5, 982, 990, 1010, 1021, 1030.5];

// Spline with control points clamped so that it never overshoots a sample.
function spline(ys) {
  let d = `M${X(0)} ${ys[0]}`, rx = X(0), ry = ys[0];
  for (let i = 1; i < ys.length; i++) {
    const x = X(i), y = ys[i];
    let lx = x, ly = y, nx = x, ny = y;
    if (i < ys.length - 1) {
      const px = X(i - 1), py = ys[i - 1], qx = X(i + 1), qy = ys[i + 1];
      lx = (1.5 * x + px) / 2.5; ly = (1.5 * y + py) / 2.5;
      nx = (1.5 * x + qx) / 2.5; ny = (1.5 * y + qy) / 2.5;
      const c = (ny - ly) * (nx - x) / (nx - lx) + y - ny;
      ly += c; ny += c;
      if (ly > py && ly > y) { ly = Math.max(py, y); ny = 2 * y - ly; }
      else if (ly < py && ly < y) { ly = Math.min(py, y); ny = 2 * y - ly; }
      if (ny > qy && ny > y) { ny = Math.max(qy, y); ly = 2 * y - ny; }
      else if (ny < qy && ny < y) { ny = Math.min(qy, y); ly = 2 * y - ny; }
    }
    d += `C${rx} ${ry} ${lx} ${ly} ${x} ${y}`;
    rx = nx; ry = ny;
  }
  return d;
}

let out = '';
rows.forEach((y, i) => {
  out += `<path class="${i === 6 ? 'axis' : 'grid'}" d="M752 ${y}H2298"${i === 0 ? ' style="stroke-width:4px"' : ''}/>`;
  const base = 757 + i * 105.3;
  out += `<text class="lab ms" x="722" y="${base}">${300 - 50 * i} ms</text>`;
  out += `<text class="lab n" x="2328" y="${base}">${3000 - 500 * i}</text>`;
});
for (let i = 0; i < 6; i++) {
  const x = 751 + 264 * i;
  out += `<path class="axis" d="M${x} 1380V1398"/>`;
  if (i) out += `<text class="lab t" x="${x + 1}" y="1418">00:${String(5 * i).padStart(2, '0')}</text>`;
}
out += `<g transform="translate(0 -.8)"><path class="line" d="${spline(users)}" stroke="#8ca557" stroke-width="6"/>`;
out += `<path class="line" d="${spline(times)}" stroke="#4c70a8" stroke-width="4"/></g>`;
svg.innerHTML = out;
```
